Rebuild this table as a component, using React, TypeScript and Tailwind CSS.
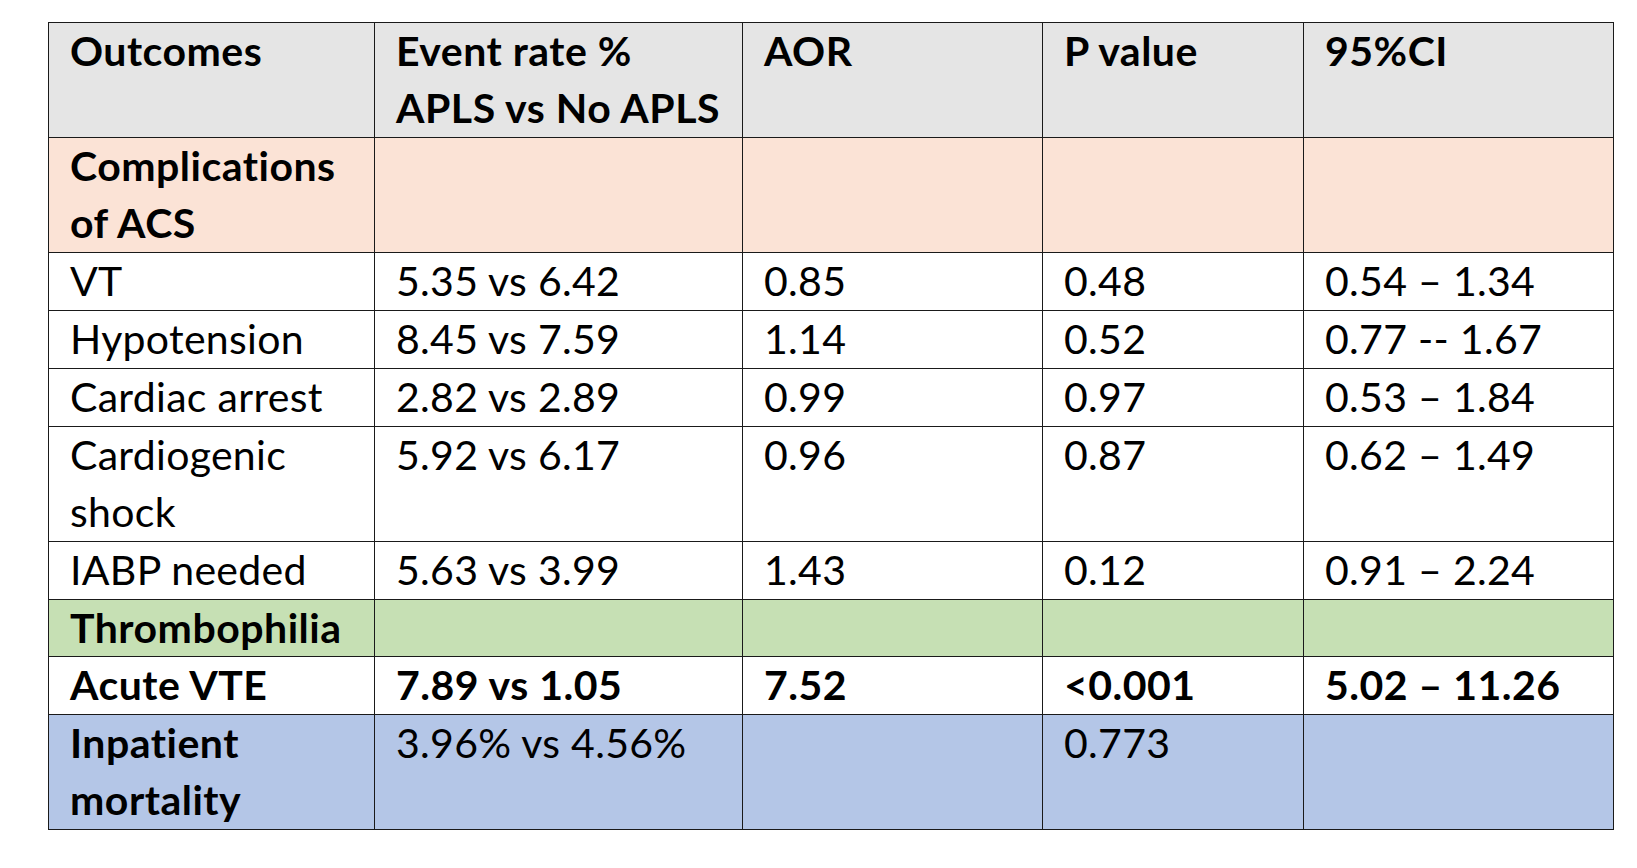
import React from 'react';

type Row = {
  cells: string[];
  bg?: string;
  bold?: boolean;
};

const rows: Row[] = [
  { cells: ['Outcomes', 'Event rate %\nAPLS vs No APLS', 'AOR', 'P value', '95%CI'], bg: 'bg-[#e5e5e5]', bold: true },
  { cells: ['Complications\nof ACS', '', '', '', ''], bg: 'bg-[#fbe3d6]', bold: true },
  { cells: ['VT', '5.35 vs 6.42', '0.85', '0.48', '0.54 – 1.34'] },
  { cells: ['Hypotension', '8.45 vs 7.59', '1.14', '0.52', '0.77 -- 1.67'] },
  { cells: ['Cardiac arrest', '2.82 vs 2.89', '0.99', '0.97', '0.53 – 1.84'] },
  { cells: ['Cardiogenic\nshock', '5.92 vs 6.17', '0.96', '0.87', '0.62 – 1.49'] },
  { cells: ['IABP needed', '5.63 vs 3.99', '1.43', '0.12', '0.91 – 2.24'] },
  { cells: ['Thrombophilia', '', '', '', ''], bg: 'bg-[#c6e0b4]', bold: true },
  { cells: ['Acute VTE', '7.89 vs 1.05', '7.52', '<0.001', '5.02 – 11.26'], bold: true },
  { cells: ['Inpatient\nmortality', '3.96% vs 4.56%', '', '0.773', ''], bg: 'bg-[#b4c6e7]' },
];

const widths = ['w-[326px]', 'w-[368px]', 'w-[300px]', 'w-[261px]', 'w-[310px]'];

export default function App() {
  return (
    <div className="w-[1637px] h-[868px] bg-white pt-[22px] pl-[48px]">
      <table
        className="border-collapse text-black text-[41px] leading-[56.95px]"
        style={{ fontFamily: 'Lato, "Liberation Sans", sans-serif' }}
      >
        <colgroup>
          {widths.map((w, i) => (
            <col key={i} className={w} />
          ))}
        </colgroup>
        <tbody>
          {rows.map((row, r) => (
            <tr key={r} className={row.bg ?? 'bg-white'}>
              {row.cells.map((cell, c) => {
                const bold = row.bold || (c === 0 && row.bg);
                return (
                  <td
                    key={c}
                    className={`border-[1.5px] border-[#1a1a1a] align-top pl-[21px] pr-1 py-0 whitespace-pre-line ${
                      bold ? 'font-bold tracking-[0.5px]' : 'font-normal tracking-[0.3px]'
                    }`}
                  >
                    {cell}
                  </td>
                );
              })}
            </tr>
          ))}
        </tbody>
      </table>
    </div>
  );
}
